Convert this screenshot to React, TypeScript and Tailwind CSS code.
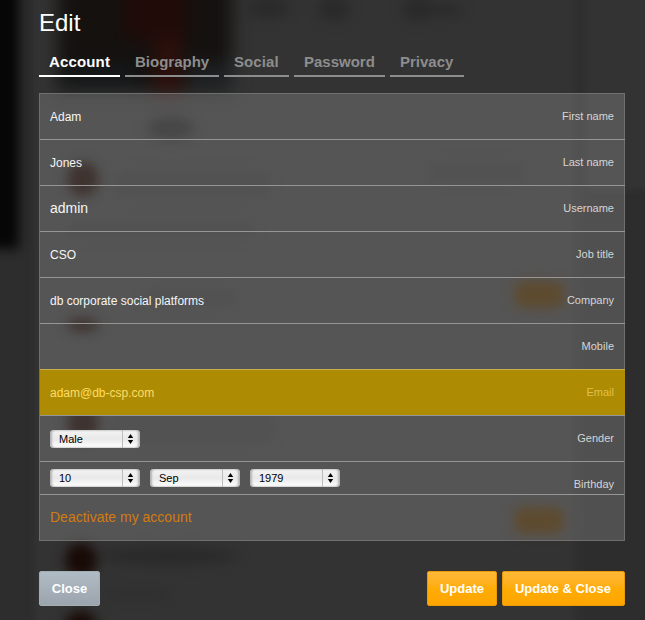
import React from "react";

const tabs = [
  { label: "Account", width: "w-[81px]", spacing: "tracking-[0.15px]" },
  { label: "Biography", width: "w-[94px]", spacing: "" },
  { label: "Social", width: "w-[65px]", spacing: "tracking-[0.1px]" },
  { label: "Password", width: "w-[91px]", spacing: "" },
  { label: "Privacy", width: "w-[74px]", spacing: "" },
];

const fields = [
  { label: "First name", value: "Adam" },
  { label: "Last name", value: "Jones" },
  { label: "Username", value: "admin", large: true },
  { label: "Job title", value: "CSO" },
  { label: "Company", value: "db corporate social platforms" },
  { label: "Mobile", value: "" },
  { label: "Email", value: "adam@db-csp.com", highlight: true },
];

function Select({ value }: { value: string }) {
  return (
    <button
      type="button"
      className="flex h-[18px] w-[90px] items-stretch rounded-[4px] bg-linear-to-b from-[#f4f4f4] via-[#e9e9e9] to-white text-[11px] text-black shadow-[inset_2px_0_2px_#b5b5b5,inset_-2px_0_2px_#b5b5b5,inset_0_0_1px_#999]"
    >
      <span className="flex-1 pl-[9px] text-left leading-[19px]">{value}</span>
      <span className="flex w-[18px] items-center justify-center border-l border-[#bcbcbc]">
        <svg width="7" height="12" viewBox="0 0 7 12" className="mr-[2px]">
          <path d="M3.5 1 6.2 5H.8ZM3.5 11 6.2 7H.8Z" fill="#000" />
        </svg>
      </span>
    </button>
  );
}

// Dimmed, out-of-focus page behind the dialog.
function Backdrop() {
  return (
    <svg className="absolute inset-0" width="645" height="620" viewBox="0 0 645 620" aria-hidden="true">
      <defs>
        <filter id="edge" colorInterpolationFilters="sRGB" filterUnits="userSpaceOnUse" x="-80" y="-80" width="800" height="780">
          <feGaussianBlur stdDeviation="3" />
        </filter>
        <filter id="soft" colorInterpolationFilters="sRGB" filterUnits="userSpaceOnUse" x="-80" y="-80" width="800" height="780">
          <feGaussianBlur stdDeviation="6" />
        </filter>
        <filter id="wide" colorInterpolationFilters="sRGB" filterUnits="userSpaceOnUse" x="-80" y="-80" width="800" height="780">
          <feGaussianBlur stdDeviation="9" />
        </filter>
      </defs>
      <g filter="url(#edge)">
        <rect x="574" y="-30" width="12" height="700" fill="#2f2f2f" />
        <rect x="582" y="190" width="100" height="480" fill="#2d2d2d" />
        <rect x="-40" y="-40" width="74" height="720" fill="#2d2d2d" />
      </g>
      <g filter="url(#wide)">
        <rect x="58" y="-50" width="174" height="140" fill="#14110f" />
        <rect x="125" y="-50" width="62" height="90" fill="#200b08" />
        <rect x="155" y="38" width="26" height="56" fill="#2e100b" />
        <rect x="66" y="62" width="70" height="25" fill="#141719" />
        <rect x="188" y="62" width="44" height="25" fill="#1d2123" />
      </g>
      <g filter="url(#soft)">
        <rect x="-60" y="-60" width="79" height="309" fill="#060606" />
        <g fill="#2a2a2a">
          <ellipse cx="268" cy="8" rx="22" ry="10" />
          <ellipse cx="334" cy="9" rx="16" ry="12" />
          <ellipse cx="418" cy="9" rx="16" ry="12" />
          <ellipse cx="446" cy="10" rx="16" ry="6" />
          <ellipse cx="168" cy="556" rx="70" ry="9" />
        </g>
        <ellipse cx="171" cy="128" rx="24" ry="11" fill="#222" />
        <g fill="#2f2f2f">
          <rect x="115" y="172" width="155" height="24" rx="12" />
          <rect x="68" y="224" width="186" height="12" rx="6" />
          <rect x="430" y="164" width="92" height="16" rx="8" />
          <rect x="145" y="290" width="90" height="16" rx="8" />
          <rect x="110" y="414" width="164" height="28" rx="14" />
          <rect x="105" y="589" width="65" height="10" rx="5" />
        </g>
        <g fill="#180a06">
          <ellipse cx="83" cy="179" rx="16" ry="17" />
          <ellipse cx="83" cy="325" rx="16" ry="7" />
          <ellipse cx="83" cy="423" rx="16" ry="17" />
          <ellipse cx="81" cy="560" rx="16" ry="17" />
          <ellipse cx="81" cy="626" rx="16" ry="15" />
        </g>
        <rect x="514" y="281" width="50" height="27" rx="9" fill="#3e2706" />
        <rect x="514" y="507" width="50" height="27" rx="9" fill="#3e2706" />
      </g>
    </svg>
  );
}

const orangeButton =
  "h-[35px] rounded-[2px] border border-[#e99a09] bg-linear-to-b from-[#ffb936] via-[#ffac05] to-[#ffa400] text-[13px] font-bold text-white";

export default function App() {
  return (
    <main className="relative h-[620px] w-[645px] overflow-hidden bg-[#333] font-['Liberation_Sans',Arial,sans-serif]">
      <Backdrop />
      <div className="relative ml-[39px] w-[586px]">
        <h1 className="h-[48px] pt-[9px] text-[24px] leading-[28px] text-white">Edit</h1>
        <nav className="flex gap-[5px]">
          {tabs.map((tab, i) => (
            <a
              key={tab.label}
              className={`h-[29px] border-b-2 pt-[5px] pl-[10px] text-[15px] leading-[18px] font-bold ${tab.width} ${tab.spacing} ${
                i === 0 ? "border-white text-white" : "border-[#8d8d8d] text-[#8d8d8d]"
              }`}
            >
              {tab.label}
            </a>
          ))}
        </nav>

        <form className="mt-4 border border-[#6f6f6f] bg-white/[0.17]">
          {fields.map((f) => (
            <div
              key={f.label}
              className={`-mr-px flex items-center justify-between border-b border-b-[#969696] pr-[11px] pl-[10px] ${
                f.highlight
                  ? "-mt-px h-[47px] border-t border-t-[#c9ad45] bg-[#ad8c03] text-[#ffdc66]"
                  : "h-[46px] text-[#f5f5f5]"
              }`}
            >
              <span className={f.large ? "text-[14px]" : "text-[12px]"}>{f.value}</span>
              <span className={`text-[11px] ${f.highlight ? "text-[#e2bf4c]" : "text-[#d5d5d5]"}`}>
                {f.label}
              </span>
            </div>
          ))}
          <div className="flex h-[46px] items-center justify-between border-b border-[#969696] px-[10px]">
            <Select value="Male" />
            <span className="text-[11px] text-[#d5d5d5]">Gender</span>
          </div>
          <div className="flex h-[33px] items-start justify-between border-b border-[#969696] px-[10px]">
            <div className="flex gap-[10px] pt-[7px]">
              <Select value="10" />
              <Select value="Sep" />
              <Select value="1979" />
            </div>
            <span className="pt-[14px] text-[11px] leading-[17px] text-[#d5d5d5]">Birthday</span>
          </div>
          <div className="flex h-[45px] items-center px-[10px]">
            <a className="text-[14px] text-[#d27c10]">Deactivate my account</a>
          </div>
        </form>

        <div className="mt-[30px] flex gap-[5px]">
          <button className="mr-auto h-[35px] w-[61px] rounded-[2px] border border-[#a3adb4] bg-linear-to-b from-[#b0bcc5] to-[#9ca4ae] text-[13px] font-bold text-white">
            Close
          </button>
          <button className={`w-[70px] ${orangeButton}`}>Update</button>
          <button className={`w-[123px] pr-px ${orangeButton}`}>Update &amp; Close</button>
        </div>
      </div>
    </main>
  );
}
